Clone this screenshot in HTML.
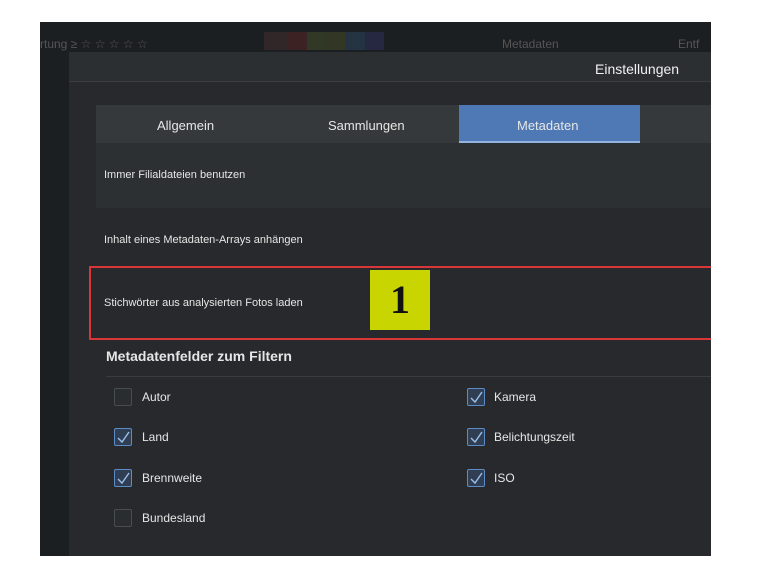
<!DOCTYPE html><html><head><style>
body{margin:0;width:770px;height:578px;background:#fff;position:relative;overflow:hidden;font-family:"Liberation Sans",sans-serif;}
div{position:absolute;box-sizing:border-box}
.t{color:#e6e6e6;font-size:12px;white-space:nowrap}
.cb{width:18px;height:18px;border:1px solid #4a4d50;border-radius:2px;background:#2a2d30}
.cb.on{border-color:#5d8cc8;background:#2f3e52}
.cb.on svg{position:absolute;left:2px;top:2px}
</style></head><body>
<div style="left:40px;top:22px;width:671px;height:534px;background:#1c1f22"></div>
<div class="t" style="left:40px;top:37px;color:#555;font-size:12px">rtung ≥ ☆ ☆ ☆ ☆ ☆</div>
<div style="left:264px;top:32px;width:120px;height:18px;background:linear-gradient(90deg,#3a2a2a 0 20%,#4a2424 20% 36%,#3a4226 36% 52%,#3a4026 52% 68%,#263c50 68% 84%,#2a2c50 84%);opacity:.7"></div>
<div class="t" style="left:502px;top:37px;color:#555">Metadaten</div>
<div class="t" style="left:678px;top:37px;color:#555">Entf</div>
<div style="left:69px;top:52px;width:642px;height:504px;background:#27292c"></div>
<div style="left:69px;top:52px;width:642px;height:30px;background:#2c2f32;border-bottom:1px solid #3b3e41"></div>
<div class="t" style="left:595px;top:61px;font-size:14px;color:#f0f0f0">Einstellungen</div>
<div style="left:96px;top:105px;width:615px;height:38px;background:#36393c"></div>
<div style="left:459px;top:105px;width:181px;height:38px;background:#4e79b4;border-bottom:2px solid #8fb4e0"></div>
<div class="t" style="left:157px;top:118px;font-size:13px">Allgemein</div>
<div class="t" style="left:328px;top:118px;font-size:13px">Sammlungen</div>
<div class="t" style="left:517px;top:118px;font-size:13px">Metadaten</div>
<div style="left:96px;top:143px;width:615px;height:65px;background:#2d3033"></div>
<div class="t" style="left:104px;top:169px;font-size:11px">Immer Filialdateien benutzen</div>
<div class="t" style="left:104px;top:234px;font-size:11px">Inhalt eines Metadaten-Arrays anhängen</div>
<div style="left:89px;top:266px;width:622px;height:74px;border:2px solid #d9363a;border-right:none"></div>
<div class="t" style="left:104px;top:297px;font-size:11px">Stichwörter aus analysierten Fotos laden</div>
<div style="left:370px;top:270px;width:60px;height:60px;background:#c9d500;color:#111;font:bold 40px 'Liberation Serif',serif;text-align:center;line-height:60px">1</div>
<div class="t" style="left:106px;top:348px;font-size:14px;font-weight:bold">Metadatenfelder zum Filtern</div>
<div style="left:106px;top:376px;width:605px;height:1px;background:#3a3d40"></div>
<div class="cb" style="left:114px;top:388px"></div><div class="t" style="left:142px;top:390px">Autor</div>
<div class="cb on" style="left:114px;top:428px"><svg width="13" height="13"><path d="M1 7l4 4 7-10" stroke="#9cc0ec" fill="none" stroke-width="1.4"/></svg></div><div class="t" style="left:142px;top:430px">Land</div>
<div class="cb on" style="left:114px;top:469px"><svg width="13" height="13"><path d="M1 7l4 4 7-10" stroke="#9cc0ec" fill="none" stroke-width="1.4"/></svg></div><div class="t" style="left:142px;top:471px">Brennweite</div>
<div class="cb" style="left:114px;top:509px"></div><div class="t" style="left:142px;top:511px">Bundesland</div>
<div class="cb on" style="left:467px;top:388px"><svg width="13" height="13"><path d="M1 7l4 4 7-10" stroke="#9cc0ec" fill="none" stroke-width="1.4"/></svg></div><div class="t" style="left:494px;top:390px">Kamera</div>
<div class="cb on" style="left:467px;top:428px"><svg width="13" height="13"><path d="M1 7l4 4 7-10" stroke="#9cc0ec" fill="none" stroke-width="1.4"/></svg></div><div class="t" style="left:494px;top:430px">Belichtungszeit</div>
<div class="cb on" style="left:467px;top:469px"><svg width="13" height="13"><path d="M1 7l4 4 7-10" stroke="#9cc0ec" fill="none" stroke-width="1.4"/></svg></div><div class="t" style="left:494px;top:471px">ISO</div>
</body></html>
